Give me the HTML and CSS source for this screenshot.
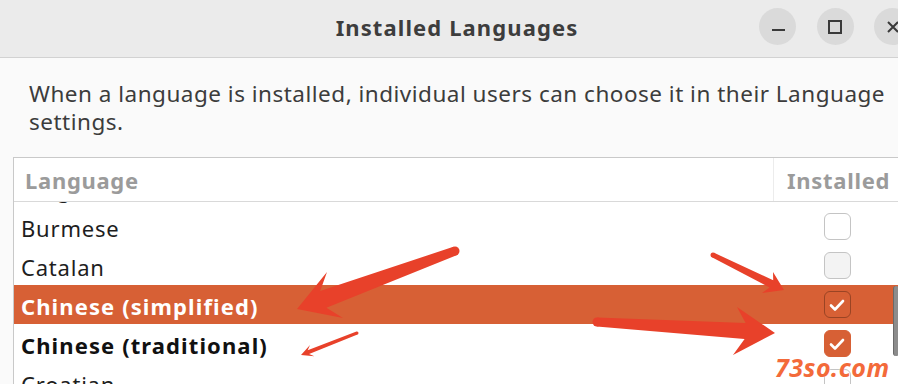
FILE: index.html
```html
<!DOCTYPE html>
<html lang="en">
<head>
<meta charset="utf-8">
<title>Installed Languages</title>
<link rel="stylesheet" href="styles.css">
</head>
<body>
<div class="window">
  <header class="titlebar">
    <div class="tb-side"></div>
    <h1 class="title">Installed Languages</h1>
    <div class="controls">
      <button class="wbtn" aria-label="Minimize"><svg width="14" height="14" viewBox="0 0 14 14"><rect x="1" y="9" width="13" height="2" fill="#3a3a3a"/></svg></button>
      <button class="wbtn" aria-label="Maximize"><svg width="14" height="14" viewBox="0 0 14 14"><rect x="1" y="1" width="12" height="12" fill="none" stroke="#3a3a3a" stroke-width="2"/></svg></button>
      <button class="wbtn" aria-label="Close"><svg width="14" height="14" viewBox="0 0 14 14"><path d="M2 2 L12 12 M12 2 L2 12" stroke="#3a3a3a" stroke-width="2"/></svg></button>
    </div>
  </header>

  <p class="desc">When a language is installed, individual users can choose it in their Language settings.</p>

  <div class="table">
    <div class="thead">
      <div class="th th-lang">Language</div>
      <div class="th th-inst">Installed</div>
    </div>
    <div class="tbody">
      <div class="rows">
        <div class="row"><div class="cell-lang">Bulgarian</div><div class="cell-inst"><span class="cb"></span></div></div>
        <div class="row"><div class="cell-lang">Burmese</div><div class="cell-inst"><span class="cb"></span></div></div>
        <div class="row"><div class="cell-lang">Catalan</div><div class="cell-inst"><span class="cb cb-hover"></span></div></div>
        <div class="row row-selected"><div class="cell-lang bold">Chinese (simplified)</div><div class="cell-inst"><span class="cb cb-sel"><svg width="26" height="26" viewBox="0 0 26 26"><path d="M7 13.5 L11 17.5 L19 9" fill="none" stroke="#fff" stroke-width="2.6" stroke-linecap="round" stroke-linejoin="round"/></svg></span></div></div>
        <div class="row"><div class="cell-lang bold">Chinese (traditional)</div><div class="cell-inst"><span class="cb cb-on"><svg width="26" height="26" viewBox="0 0 26 26"><path d="M7 13.5 L11 17.5 L19 9" fill="none" stroke="#fff" stroke-width="2.6" stroke-linecap="round" stroke-linejoin="round"/></svg></span></div></div>
        <div class="row"><div class="cell-lang">Croatian</div><div class="cell-inst"><span class="cb"></span></div></div>
      </div>
    </div>
  </div>
</div>

<div class="scrollthumb"></div>

<svg class="annot" width="898" height="384" viewBox="0 0 898 384">
  <g fill="#e8412a">
    <polygon points="453.4,246.8 320.2,290.9 327,272 297,309 343,318 326.4,307.8 456.6,255.2"/>
    <circle cx="455" cy="251" r="4.5"/>
    <polygon points="356.5,331.6 307.7,350.2 310,345 301,355 314.4,356.2 309.1,354 357.5,334.4"/>
    <circle cx="357" cy="333" r="1.5"/>
    <polygon points="714.1,252.8 773.2,280.2 773,272 784,290 762,293 769.6,287.4 711.9,257.2"/>
    <circle cx="713" cy="255" r="2.5"/>
    <polygon points="597.3,317.5 745.6,323.1 737,307 775,333 733,355 744.6,339.1 596.7,326.5"/>
    <circle cx="597" cy="322" r="4.5"/>
  </g>
</svg>
<div class="watermark">73so.com</div>
</body>
</html>
```

FILE: styles.css
```css
* { box-sizing: border-box; }
html, body {
  margin: 0;
  padding: 0;
}
body {
  width: 898px;
  height: 384px;
  overflow: hidden;
  position: relative;
  background: #fafafa;
  font-family: "Noto Sans", "Open Sans", sans-serif;
  color: #3c3c3c;
}
.window {
  margin-right: -16px;
}
.titlebar {
  height: 58px;
  background: #ebebeb;
  border-bottom: 1px solid #d2d2d2;
  display: grid;
  grid-template-columns: 1fr auto 1fr;
  align-items: center;
}
.title {
  margin: 0;
  font-size: 22px;
  font-weight: 700;
  letter-spacing: 1.1px;
  color: #3d3d3d;
  padding-bottom: 3px;
}
.controls {
  justify-self: end;
  display: flex;
  gap: 20.5px;
  padding-right: 3px;
  margin-top: -4px;
}
.wbtn {
  width: 37px;
  height: 37px;
  border-radius: 50%;
  border: none;
  background: #dadada;
  padding: 0;
  display: flex;
  align-items: center;
  justify-content: center;
}
.desc {
  margin: 22px 0 0 29px;
  font-size: 22.5px;
  letter-spacing: 0.5px;
  line-height: 28px;
  color: #3c3c3c;
  width: 870px;
}
.table {
  margin-top: 21px;
  margin-left: 13px;
  width: 888px;
  background: #fff;
  border: 1px solid #c9c9c9;
}
.thead {
  display: grid;
  grid-template-columns: 759px 127px;
  height: 44px;
  border-bottom: 1px solid #d9d9d9;
}
.th {
  font-size: 22px;
  font-weight: 700;
  letter-spacing: 0.7px;
  color: #9b9b9b;
  display: flex;
  align-items: center;
  padding-top: 1px;
  white-space: nowrap;
}
.th-lang { padding-left: 11px; }
.th-inst {
  padding-left: 13px;
  border-left: 1px solid #ececec;
}
.tbody {
  height: 190px;
  overflow: hidden;
}
.rows {
  margin-top: -34px;
}
.row {
  display: grid;
  grid-template-columns: 759px 127px;
  height: 39px;
  align-items: center;
  color: #1e1e1e;
}
.cell-lang {
  padding-left: 7px;
  font-size: 22px;
  letter-spacing: 0.8px;
  padding-top: 2px;
  white-space: nowrap;
}
.bold { font-weight: 700; color: #111; letter-spacing: 1.1px; }
.cell-inst {
  display: flex;
  justify-content: center;
  padding-left: 1px;
}
.cb {
  width: 27px;
  height: 27px;
  border-radius: 6px;
  border: 1.5px solid #c4c4c4;
  background: #fff;
  display: flex;
  align-items: center;
  justify-content: center;
}
.cb svg { flex: none; }
.cb-hover { background: #f3f3f3; }
.row-selected {
  background: #d76035;
}
.row-selected .cell-lang { color: #fff; }
.cb-sel {
  background: transparent;
  border-color: #9a4424;
}
.cb-on {
  background: #d76035;
  border-color: #d76035;
}
.scrollthumb {
  position: absolute;
  left: 893px;
  top: 286px;
  width: 6px;
  height: 70px;
  border-radius: 3px;
  background: #8c8c8c;
  border-left: 1px solid #6a6a6a;
}
.annot {
  position: absolute;
  left: 0;
  top: 0;
  pointer-events: none;
}
.watermark {
  position: absolute;
  left: 775px;
  top: 350px;
  font-family: "Noto Sans", sans-serif;
  font-weight: 700;
  font-style: italic;
  font-size: 25px;
  color: #f36a3a;
  letter-spacing: 0.5px;
  text-shadow: 0 0 2px #fff;
}
```
